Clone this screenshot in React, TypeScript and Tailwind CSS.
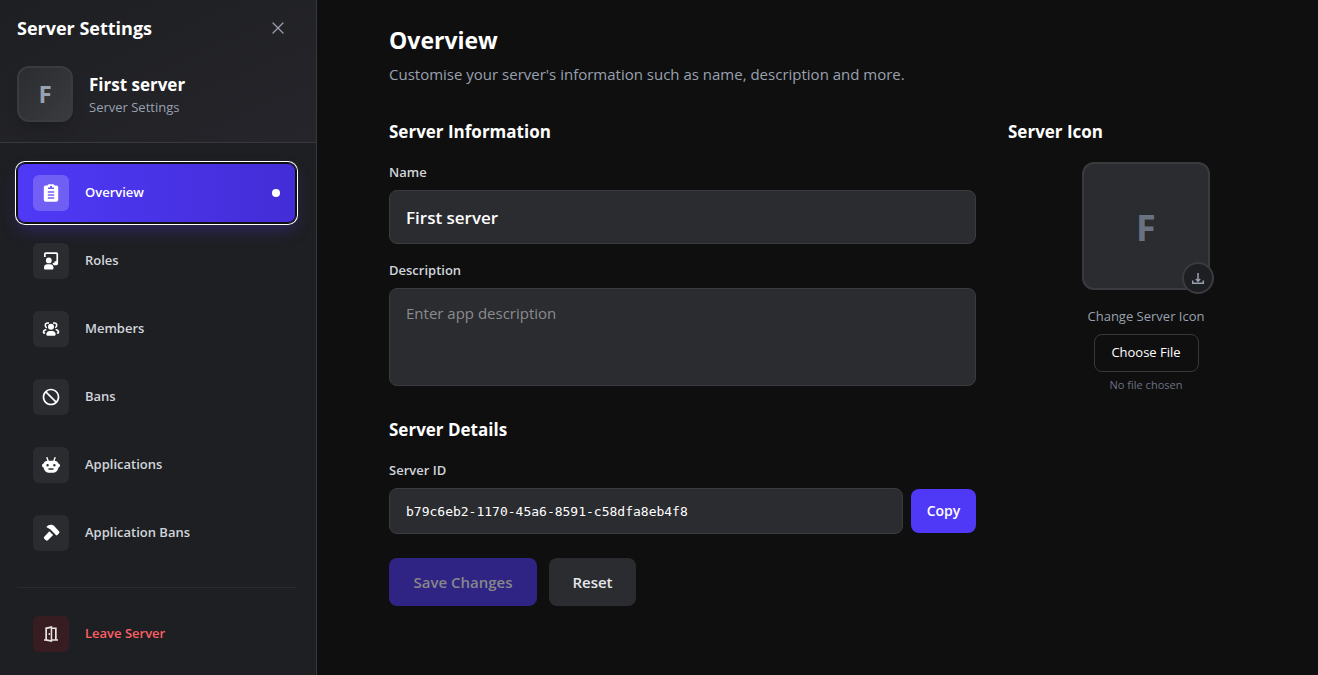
import React, { useState } from "react";
import { X } from "lucide-react";
import { BiBlock } from "react-icons/bi";

function ClipboardIcon() {
  return (
    <svg viewBox="0 0 20 20" className="size-5" fill="currentColor" aria-hidden="true">
      <path
        fillRule="evenodd"
        d="M6.500 2.500C6.800 1.600 7.400 1.200 8.200 1.200h3.600c.8 0 1.400.4 1.700 1.300h1.700c1.200 0 2 .8 2 2v12.300c0 1.200-.8 2-2 2H4.800c-1.200 0-2-.8-2-2V4.500c0-1.200.8-2 2-2zM9 3v1.500H7V6h6V4.500h-2V3zM6.800 8.300v1.400h6.400V8.300zm0 3v1.400h6.400v-1.400zm0 3v1.400h6.400v-1.400z"
      />
    </svg>
  );
}

function BoardIcon() {
  return (
    <svg viewBox="0 0 20 20" className="size-5" fill="currentColor" aria-hidden="true">
      <path d="M3 6V3c0-1 .7-1.700 1.700-1.700h10.700c1 0 1.700.7 1.700 1.700v9.500c0 1-.7 1.700-1.700 1.700h-2.600l-1.300-1.500.6-.9 1.300.1V10.500l2-.5V3H4.700v3z" />
      <circle cx="7.800" cy="9.400" r="2.900" />
      <path d="M3 16.500c0-2 1.500-3.200 3.200-3.200h3c1.700 0 3.200 1.200 3.200 3.200v1c0 .6-.3.900-.9.900H3.900c-.6 0-.9-.3-.9-.9z" />
    </svg>
  );
}

function GroupIcon() {
  return (
    <svg viewBox="0 0 20 20" className="size-5" fill="currentColor" aria-hidden="true">
      <circle cx="10" cy="7.800" r="3" />
      <path d="M5.300 15.300c0-2 1.400-3.300 3.300-3.300h2.800c1.900 0 3.300 1.300 3.300 3.300 0 .9-.6 1.500-1.500 1.500H6.800c-.9 0-1.500-.6-1.500-1.500z" />
      <path
        d="M7.300 4.100C5.600 3.600 4.300 4.700 4.300 6.300c0 .9.400 1.600 1 2M12.700 4.100c1.700-.5 3 .6 3 2.200 0 .9-.4 1.600-1 2M4.700 10.700c-1.500.3-2.300 1.400-2.200 2.900 0 .4.400.5 1 .5M15.300 10.700c1.500.3 2.300 1.400 2.200 2.900 0 .4-.4.5-1 .5"
        fill="none"
        stroke="currentColor"
        strokeWidth="1.600"
        strokeLinecap="round"
      />
    </svg>
  );
}

function RobotIcon() {
  return (
    <svg viewBox="0 0 20 20" className="size-5" fill="currentColor" aria-hidden="true">
      <path d="M6 2.700l1.300 3.800M14 2.700l-1.300 3.800" stroke="currentColor" strokeWidth="1.400" strokeLinecap="round" />
      <path
        fillRule="evenodd"
        d="M6.500 5.800h7c2 0 3.300 1 3.800 2.800 1.100.2 1.700.9 1.700 1.900s-.6 1.800-1.600 2.100c-.5 3.200-2.400 5.100-4.900 5.100h-5c-2.500 0-4.400-1.900-4.900-5.100C1.600 12.300 1 11.500 1 10.500s.6-1.700 1.700-1.900C3.200 6.800 4.500 5.800 6.500 5.800zM6.600 9a1.200 1.200 0 100 2.400 1.200 1.200 0 000-2.400zm6.800 0a1.200 1.200 0 100 2.400 1.200 1.200 0 000-2.400zM7.500 13.300v1.400h5v-1.400z"
      />
    </svg>
  );
}

function HammerIcon() {
  return (
    <svg viewBox="0 0 20 20" className="size-5" fill="currentColor" aria-hidden="true">
      <path d="M5.300 4.100C7.800 1.300 11.300 1.200 13.600 3.400l4.600 5.100c.4.500.4 1 0 1.500l-1.800 2c-.4.500-1.100.5-1.500 0L9.500 6.600z" />
      <path d="M8.400 8.200l3.700 3.700-5.200 5.400c-.6.600-1.400.6-2 0l-1.600-1.600c-.6-.6-.6-1.400 0-2z" />
    </svg>
  );
}

function DoorIcon() {
  return (
    <svg viewBox="0 0 20 20" className="size-5" fill="currentColor" aria-hidden="true">
      <path
        fillRule="evenodd"
        d="M11.200 2v1.500h4.500v11.700H17v1.500h-5.800V18L4.500 16.700H3v-1.500h1.300V3.600zM6 5v10.200l3.700.8V4.200zm5.200 0v10.200H14V5z"
      />
      <circle cx="8.300" cy="10" r="0.900" />
    </svg>
  );
}

function DownloadIcon() {
  return (
    <svg viewBox="0 0 14 14" className="size-3.5" fill="none" stroke="currentColor" strokeWidth="1.500" aria-hidden="true">
      <path d="M7 2v7.500M4.800 8L7 10.200 9.200 8M1.700 9.500v2.700h10.600V9.500" />
    </svg>
  );
}

const items = [
  { label: "Overview", icon: <ClipboardIcon /> },
  { label: "Roles", icon: <BoardIcon /> },
  { label: "Members", icon: <GroupIcon /> },
  { label: "Bans", icon: <BiBlock className="size-5" /> },
  { label: "Applications", icon: <RobotIcon /> },
  { label: "Application Bans", icon: <HammerIcon /> },
];

function Sidebar() {
  return (
    <aside className="flex w-[317px] shrink-0 flex-col border-r border-[#37383c] bg-[#1e1f22]">
      <header className="border-b border-[#37383c] bg-linear-to-br from-[#1e1f22] to-[#25252b] pt-3 pr-5 pb-5 pl-[17px]">
        <div className="flex items-center justify-between">
          <h2 className="text-lg leading-8 font-bold text-white">Server Settings</h2>
          <button type="button" aria-label="Close" className="mr-2 text-gray-400">
            <X size={20} strokeWidth={1.5} />
          </button>
        </div>
        <div className="mt-[22px] flex items-center gap-4">
          <div className="flex size-14 items-center justify-center rounded-xl border-2 border-[#3a3b3f] bg-linear-to-br from-[#2b2c30] to-[#3a3b3f] text-2xl font-bold text-gray-400 shadow-lg">
            F
          </div>
          <div className="pt-0.5">
            <p className="text-[17px] leading-6 font-bold text-white">First server</p>
            <p className="text-[13px] leading-5 text-gray-400">Server Settings</p>
          </div>
        </div>
      </header>
      <nav className="flex flex-1 flex-col gap-2 pt-5 pr-5 pl-[17px]">
        {items.map(({ label, icon }, i) => (
          <button
            key={label}
            type="button"
            className={
              i === 0
                ? "flex h-15 items-center gap-4 rounded-lg bg-linear-to-r from-[#4f39f6] to-[#432dd7] px-4 text-white shadow-[inset_0_0_0_1px_#101010,0_0_0_1px_#101010,0_0_0_2px_#ffffff,0_8px_16px_#4f39f640]"
                : "flex h-15 items-center gap-4 rounded-lg px-4 text-gray-300"
            }
          >
            <span
              className={
                i === 0
                  ? "flex size-9 items-center justify-center rounded-md bg-white/20 text-white"
                  : "flex size-9 items-center justify-center rounded-md bg-[#2b2c30] text-white"
              }
            >
              {icon}
            </span>
            <span className="text-[13px] font-semibold">{label}</span>
            {i === 0 && <span className="ml-auto size-2 rounded-full bg-white" />}
          </button>
        ))}
        <div className="mt-4 border-t border-[#2b2c30] pt-4">
          <button type="button" className="flex h-15 w-full items-center gap-4 rounded-lg px-4 text-[#ff5f62]">
            <span className="flex size-9 items-center justify-center rounded-md bg-[#371d22] text-[#e8e3e3]">
              <DoorIcon />
            </span>
            <span className="text-[13px] font-semibold">Leave Server</span>
          </button>
        </div>
      </nav>
    </aside>
  );
}

export default function App() {
  const [name, setName] = useState("First server");
  const [description, setDescription] = useState("");
  return (
    <div className="flex min-h-screen bg-[#0f0f0f] font-['Open_Sans','Noto_Sans',sans-serif] text-white">
      <Sidebar />
      <main className="min-w-0 flex-1 pt-6 pr-[34px] pl-[72px]">
        <h1 className="text-[23px] leading-8 font-bold">Overview</h1>
        <p className="mt-1.5 text-[15px] leading-6 text-gray-400">
          Customise your server's information such as name, description and more.
        </p>
        <div className="mt-8 grid grid-cols-[minmax(0,1fr)_276px] gap-8">
          <form onSubmit={(e) => e.preventDefault()}>
            <h2 className="text-[17px] leading-7 font-bold">Server Information</h2>
            <label htmlFor="name" className="mt-4 block text-[13px] leading-5 font-semibold text-gray-300">
              Name
            </label>
            <input
              id="name"
              value={name}
              onChange={(e) => setName(e.target.value)}
              className="mt-2 block h-[54px] w-full rounded-lg border border-[#3a3b3f] bg-[#2b2c30] px-4 text-[17px] font-semibold text-white"
            />
            <label htmlFor="description" className="mt-4 block text-[13px] leading-5 font-semibold text-gray-300">
              Description
            </label>
            <textarea
              id="description"
              value={description}
              onChange={(e) => setDescription(e.target.value)}
              placeholder="Enter app description"
              className="mt-2 block h-[98px] w-full resize-none rounded-lg border border-[#3a3b3f] bg-[#2b2c30] px-4 py-3 text-[15px] leading-6 text-white placeholder:text-[#8a8b8f]"
            />
            <h2 className="mt-[30px] text-[17px] leading-7 font-bold">Server Details</h2>
            <label htmlFor="server-id" className="mt-4 block text-[13px] leading-5 font-semibold text-gray-300">
              Server ID
            </label>
            <div className="mt-2 flex items-center gap-2">
              <input
                id="server-id"
                readOnly
                value="b79c6eb2-1170-45a6-8591-c58dfa8eb4f8"
                className="h-[46px] min-w-0 flex-1 rounded-lg border border-[#3a3b3f] bg-[#2b2c30] px-4 font-['DejaVu_Sans_Mono',monospace] text-[13px] text-white"
              />
              <button type="button" className="h-11 w-[65px] rounded-lg bg-[#4f39f6] text-sm font-semibold text-white">
                Copy
              </button>
            </div>
            <div className="mt-6 flex gap-3">
              <button
                type="submit"
                disabled
                className="h-12 w-[148px] rounded-lg bg-[#2f2483] text-[15px] font-semibold text-[#87878a]"
              >
                Save Changes
              </button>
              <button
                type="reset"
                className="h-12 w-[87px] rounded-lg bg-[#2b2c30] text-[15px] font-semibold text-gray-200"
              >
                Reset
              </button>
            </div>
          </form>
          <section>
            <h2 className="text-[17px] leading-7 font-bold">Server Icon</h2>
            <div className="mt-4 flex flex-col items-center">
              <div className="relative flex size-32 items-center justify-center rounded-xl border-2 border-[#3a3b3f] bg-[#2b2c30] pt-1 text-4xl font-bold text-gray-500">
                F
                <span className="absolute -right-1.5 -bottom-1.5 flex size-8 items-center justify-center rounded-full border-2 border-[#3a3b3f] bg-[#1e1f22] text-gray-400">
                  <DownloadIcon />
                </span>
              </div>
              <p className="mt-4 text-[13px] leading-5 text-gray-400">Change Server Icon</p>
              <button
                type="button"
                className="mt-2 h-[38px] w-[105px] rounded-lg border border-[#37383c] text-[13px] text-white"
              >
                Choose File
              </button>
              <p className="mt-1 text-[11px] leading-[18px] text-gray-500">No file chosen</p>
            </div>
          </section>
        </div>
      </main>
    </div>
  );
}
